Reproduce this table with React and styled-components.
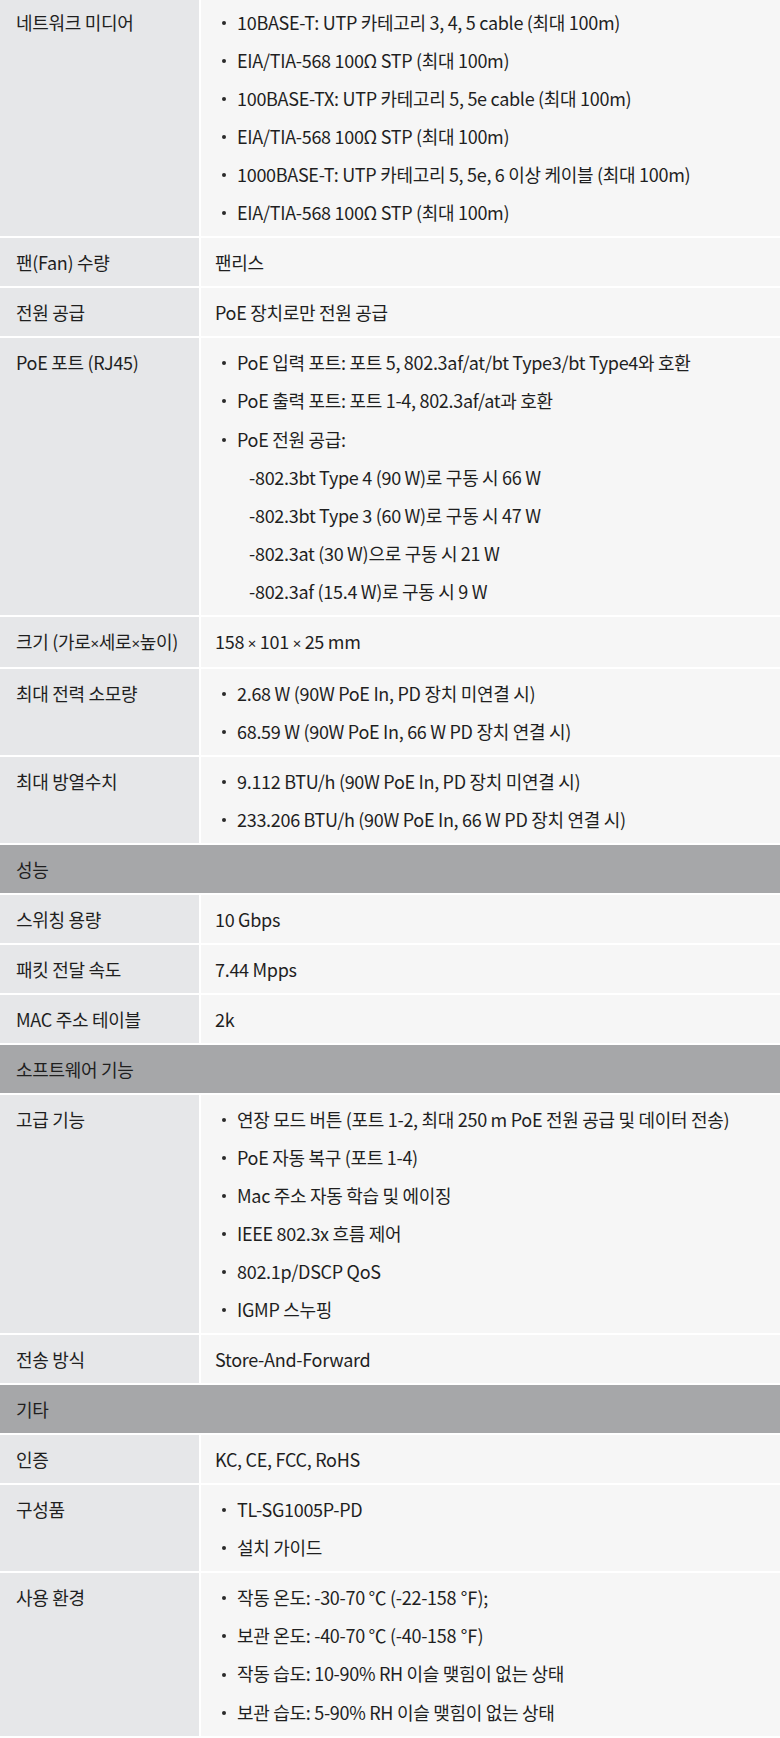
import React from "react";
import styled, { createGlobalStyle } from "styled-components";

const GlobalStyles = createGlobalStyle`
  html, body {
    margin: 0;
    padding: 0;
    background: #ffffff;
  }
  body {
    font-family: "Noto Sans CJK KR", "Noto Sans", sans-serif;
    color: #1f1f1f;
  }
`;

const Table = styled.div`
  width: 780px;
  margin-top: -2px;
  display: flex;
  flex-direction: column;
  gap: 2px;
  background: #ffffff;
  padding-bottom: 3px;
`;

const Row = styled.div`
  display: grid;
  grid-template-columns: 199px 1fr;
  column-gap: 2px;
`;

const Label = styled.div`
  background: #e6e7e9;
  padding: 4.95px 0 4.95px 16px;
  font-size: 18px;
  line-height: 38.1px;
  letter-spacing: -0.3px;
  white-space: nowrap;
`;

const Value = styled.div`
  background: #f6f6f6;
  padding: 4.95px 0 4.95px 14px;
  font-size: 18px;
  line-height: 38.1px;
  letter-spacing: -0.3px;
`;

const Section = styled.div`
  height: 48px;
  display: flex;
  align-items: center;
  padding-left: 16px;
  background: #a6a7a9;
  font-size: 18px;
  letter-spacing: -0.3px;
  color: #1f1f1f;
`;

const Line = styled.div`
  position: relative;
  white-space: nowrap;
  padding-left: ${({ $kind }) => ($kind === "sub" ? "34px" : "22px")};

  &::before {
    content: ${({ $kind }) => ($kind === "bullet" ? '""' : "none")};
    position: absolute;
    left: 7px;
    top: 50%;
    width: 4px;
    height: 4px;
    margin-top: -1px;
    border-radius: 50%;
    background: #2a2a2a;
  }
`;

const Times = styled.span`
  font-family: "Noto Sans", sans-serif;
  font-size: 15px;
`;

const withTimes = (text) => {
  if (typeof text !== "string" || !text.includes("×")) return text;
  const parts = text.split("×");
  return parts.map((p, i) => (
    <React.Fragment key={i}>
      {p}
      {i < parts.length - 1 && <Times>×</Times>}
    </React.Fragment>
  ));
};

const b = (text) => ({ text, kind: "bullet" });
const s = (text) => ({ text, kind: "sub" });

const spec = [
  {
    label: "네트워크 미디어",
    value: [
      b("10BASE-T: UTP 카테고리 3, 4, 5 cable (최대 100m)"),
      b("EIA/TIA-568 100Ω STP (최대 100m)"),
      b("100BASE-TX: UTP 카테고리 5, 5e cable (최대 100m)"),
      b("EIA/TIA-568 100Ω STP (최대 100m)"),
      b("1000BASE-T: UTP 카테고리 5, 5e, 6 이상 케이블 (최대 100m)"),
      b("EIA/TIA-568 100Ω STP (최대 100m)"),
    ],
  },
  { label: "팬(Fan) 수량", value: "팬리스" },
  { label: "전원 공급", value: "PoE 장치로만 전원 공급" },
  {
    label: "PoE 포트 (RJ45)",
    value: [
      b("PoE 입력 포트: 포트 5, 802.3af/at/bt Type3/bt Type4와 호환"),
      b("PoE 출력 포트: 포트 1-4, 802.3af/at과 호환"),
      b("PoE 전원 공급:"),
      s("-802.3bt Type 4 (90 W)로 구동 시 66 W"),
      s("-802.3bt Type 3 (60 W)로 구동 시 47 W"),
      s("-802.3at (30 W)으로 구동 시 21 W"),
      s("-802.3af (15.4 W)로 구동 시 9 W"),
    ],
  },
  { label: "크기 (가로×세로×높이)", value: "158 × 101 × 25 mm" },
  {
    label: "최대 전력 소모량",
    value: [
      b("2.68 W (90W PoE In, PD 장치 미연결 시)"),
      b("68.59 W (90W PoE In, 66 W PD 장치 연결 시)"),
    ],
  },
  {
    label: "최대 방열수치",
    value: [
      b("9.112 BTU/h (90W PoE In, PD 장치 미연결 시)"),
      b("233.206 BTU/h (90W PoE In, 66 W PD 장치 연결 시)"),
    ],
  },
  { section: "성능" },
  { label: "스위칭 용량", value: "10 Gbps" },
  { label: "패킷 전달 속도", value: "7.44 Mpps" },
  { label: "MAC 주소 테이블", value: "2k" },
  { section: "소프트웨어 기능" },
  {
    label: "고급 기능",
    value: [
      b("연장 모드 버튼 (포트 1-2, 최대 250 m PoE 전원 공급 및 데이터 전송)"),
      b("PoE 자동 복구 (포트 1-4)"),
      b("Mac 주소 자동 학습 및 에이징"),
      b("IEEE 802.3x 흐름 제어"),
      b("802.1p/DSCP QoS"),
      b("IGMP 스누핑"),
    ],
  },
  { label: "전송 방식", value: "Store-And-Forward" },
  { section: "기타" },
  { label: "인증", value: "KC, CE, FCC, RoHS" },
  {
    label: "구성품",
    value: [b("TL-SG1005P-PD"), b("설치 가이드")],
  },
  {
    label: "사용 환경",
    value: [
      b("작동 온도: -30-70 ℃ (-22-158 ℉);"),
      b("보관 온도: -40-70 ℃ (-40-158 ℉)"),
      b("작동 습도: 10-90% RH 이슬 맺힘이 없는 상태"),
      b("보관 습도: 5-90% RH 이슬 맺힘이 없는 상태"),
    ],
  },
];

const SpecRow = ({ row }) => (
  <Row>
    <Label>{withTimes(row.label)}</Label>
    <Value>
      {Array.isArray(row.value)
        ? row.value.map((item, i) => (
            <Line key={i} $kind={item.kind}>
              {item.text}
            </Line>
          ))
        : withTimes(row.value)}
    </Value>
  </Row>
);

export default function App() {
  return (
    <>
      <GlobalStyles />
      <Table>
        {spec.map((row, i) =>
          row.section ? (
            <Section key={i}>{row.section}</Section>
          ) : (
            <SpecRow key={i} row={row} />
          )
        )}
      </Table>
    </>
  );
}
